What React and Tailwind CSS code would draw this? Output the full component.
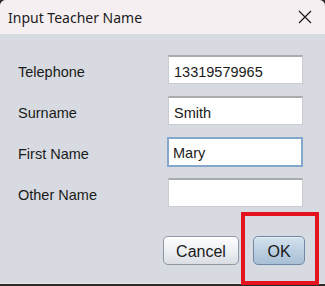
import React from 'react';

const fields = [
    { label: 'Telephone', value: '13319579965' },
    { label: 'Surname', value: 'Smith' },
    { label: 'First Name', value: 'Mary', focused: true },
    { label: 'Other Name', value: '' },
];

const App = () => {
    return (
        <div className="relative w-[325px] h-[286px] overflow-hidden bg-[#2e2a28]">
            <div className="flex flex-col h-[283px] bg-[#d7dae0] rounded-tl-[6px] rounded-tr-[6px] overflow-hidden">
                {/* Title bar */}
                <div className="flex items-center justify-between h-[34px] pl-[8px] pr-[13px] bg-[#f6eff2] font-['Noto_Sans',sans-serif] text-[14px] text-[#1b1b1b]">
                    <span>Input Teacher Name</span>
                    <svg width="14" height="14" viewBox="0 0 14 14" className="text-[#1b1b1b]">
                        <path d="M1 1 L13 13 M13 1 L1 13" stroke="currentColor" strokeWidth="1.2" />
                    </svg>
                </div>

                {/* Form */}
                <div className="flex flex-col gap-[12px] pt-[21px] pl-[18px] pr-[22px] font-['Liberation_Sans',Arial,sans-serif] text-[14.5px] text-[#1a1a1a]">
                    {fields.map((f) => (
                        <div key={f.label} className="flex items-center justify-between h-[29px]">
                            <span className="pt-[7px]">{f.label}</span>
                            <div
                                className={
                                    f.focused
                                        ? 'flex items-center w-[136px] h-[30px] pl-[4px] pt-[5px] bg-white border-2 border-[#85a7cc]'
                                        : 'flex items-center w-[135px] h-[29px] pl-[5px] pt-[5px] bg-white border border-[#c9ccd0] border-t-2 border-t-[#a9abae]'
                                }
                            >
                                {f.value}
                            </div>
                        </div>
                    ))}
                </div>

                {/* Buttons */}
                <div className="flex justify-end gap-[14px] pt-[29px] pr-[20px] font-['Liberation_Sans',Arial,sans-serif] text-[16px] text-[#1a1a1a]">
                    <button className="w-[76px] h-[29px] pt-[2px] rounded-[5px] border border-[#8f99a6] bg-gradient-to-b from-[#fdfdfe] via-[#eef0f3] to-[#d9dde3] shadow-[inset_0_1px_0_#ffffff]">
                        Cancel
                    </button>
                    <button className="w-[52px] h-[29px] pt-[2px] rounded-[5px] border border-[#6e88a3] bg-gradient-to-b from-[#d6e2ee] via-[#bccfe2] to-[#a9bfd5] shadow-[inset_0_1px_0_#e8f0f8]">
                        OK
                    </button>
                </div>
            </div>
            <div className="h-px bg-[#eceae8]"></div>

            {/* Red highlight */}
            <div className="absolute left-[241px] top-[212px] w-[78px] h-[73px] border-4 border-[#e3141d]"></div>
        </div>
    );
};

export default App;
